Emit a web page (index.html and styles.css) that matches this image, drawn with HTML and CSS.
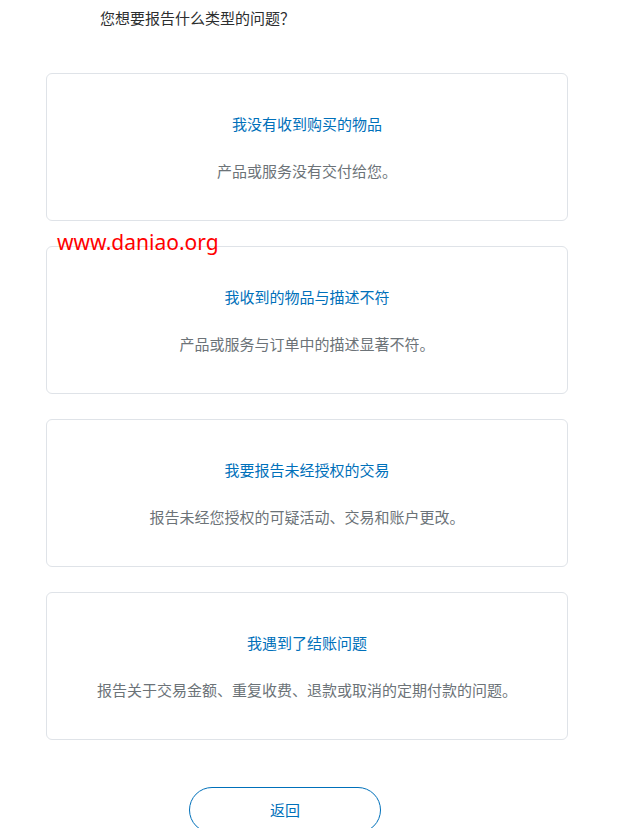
FILE: index.html
```html
<!DOCTYPE html>
<html lang="zh-CN">
<head>
<meta charset="utf-8">
<title>报告问题</title>
<link rel="stylesheet" href="styles.css">
</head>
<body>
<div class="page">
  <h1 class="question">您想要报告什么类型的问题？</h1>
  <div class="cards">
    <a class="card" href="#">
      <span class="card-title">我没有收到购买的物品</span>
      <span class="card-desc">产品或服务没有交付给您。</span>
    </a>
    <a class="card" href="#">
      <span class="card-title">我收到的物品与描述不符</span>
      <span class="card-desc">产品或服务与订单中的描述显著不符。</span>
    </a>
    <a class="card" href="#">
      <span class="card-title">我要报告未经授权的交易</span>
      <span class="card-desc">报告未经您授权的可疑活动、交易和账户更改。</span>
    </a>
    <a class="card" href="#">
      <span class="card-title">我遇到了结账问题</span>
      <span class="card-desc">报告关于交易金额、重复收费、退款或取消的定期付款的问题。</span>
    </a>
  </div>
  <div class="actions">
    <button class="back-btn" type="button">返回</button>
  </div>
  <div class="watermark">www.daniao.org</div>
</div>
</body>
</html>
```
FILE: styles.css
```css
html, body {
  margin: 0;
  padding: 0;
  background: #ffffff;
}
body {
  font-family: "Noto Sans CJK SC", "Noto Sans", sans-serif;
  font-size: 15px;
  line-height: 20px;
  overflow: hidden;
}
.page {
  position: relative;
  padding: 8px 0 0 46px;
  width: 522px;
}
.question {
  margin: 0 0 0 54px;
  font-size: 15px;
  font-weight: normal;
  line-height: 20px;
  color: #2c2e2f;
}
.cards {
  margin-top: 45px;
  display: flex;
  flex-direction: column;
  gap: 25px;
}
.card {
  box-sizing: border-box;
  height: 148px;
  border: 1px solid #dfe3e8;
  border-radius: 6px;
  display: flex;
  flex-direction: column;
  align-items: center;
  padding-top: 40px;
  text-decoration: none;
  background: #fff;
}
.card-title {
  color: #0070ba;
  font-size: 15px;
  line-height: 20px;
}
.card-desc {
  margin-top: 27px;
  color: #6c7378;
  font-size: 15px;
  line-height: 20px;
}
.actions {
  margin-top: 47px;
  display: flex;
  padding-left: 143px;
}
.back-btn {
  width: 192px;
  height: 46px;
  border: 1px solid #0070ba;
  border-radius: 23px;
  background: #fff;
  color: #0070ba;
  font-family: "Noto Sans CJK SC", "Noto Sans", sans-serif;
  font-size: 15px;
  line-height: 20px;
  padding: 0;
}
.watermark {
  position: absolute;
  left: 57px;
  top: 230px;
  font-family: "Noto Sans", sans-serif;
  font-size: 21px;
  line-height: 24px;
  color: #ff0000;
}
```
